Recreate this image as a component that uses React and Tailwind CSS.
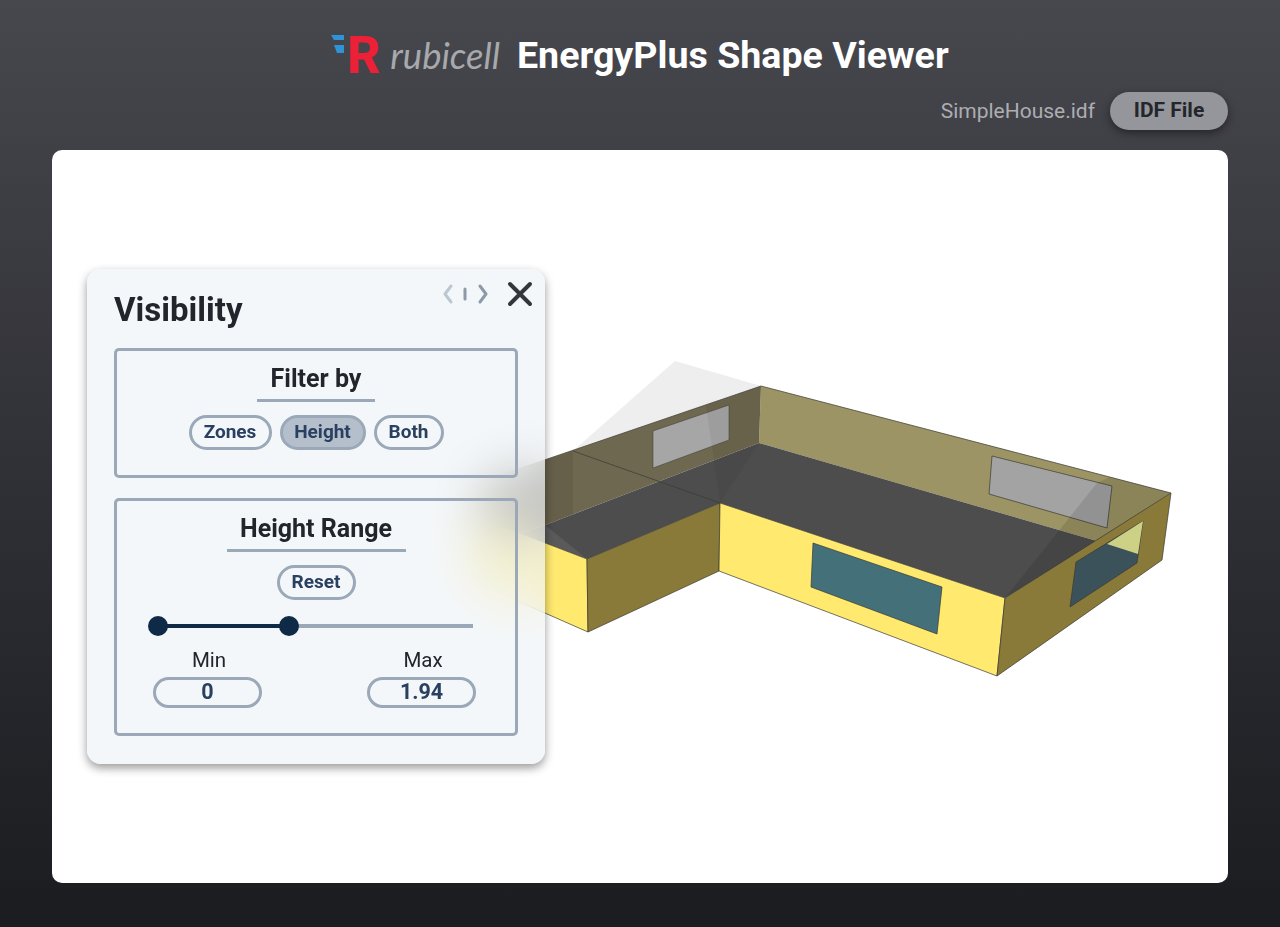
import React from 'react';

const sans = "font-['Roboto',sans-serif]";

const Pill = ({ active, className = '', children }) => (
  <button
    className={`h-[35px] rounded-full border-[3px] border-[#9aa8b8] text-[19px] font-bold text-[#2a4060] ${
      active ? 'bg-[#b4bfcb]' : 'bg-transparent'
    } ${className}`}
  >
    {children}
  </button>
);

const SectionTitle = ({ underline, children }) => (
  <div className={`flex flex-col items-center ${underline}`}>
    <h3 className="text-[25px] leading-[34px] font-bold text-[#22252b] whitespace-nowrap">{children}</h3>
    <div className={`mt-[3px] h-[3px] bg-[#9aa8b8] ${underline}`} />
  </div>
);

const NumberField = ({ label, value }) => (
  <div className="flex w-[109px] flex-col items-center">
    <span className="pl-[3px] text-[20.5px] leading-[24px] text-[#22252b]">{label}</span>
    <div className="mt-[5px] flex h-[31px] w-full items-center justify-center rounded-full border-[3px] border-[#9aa8b8] text-[21.5px] font-bold text-[#2a4060]">
      {value}
    </div>
  </div>
);

const Building = () => (
  <svg className="absolute inset-0 h-full w-full" viewBox="52 150 1176 733">
    <g stroke="#3a3a32" strokeWidth="0.7" strokeLinejoin="round">
      {/* ghost roof */}
      <polygon points="675,361 761,386 573,451" fill="#eeeeee" stroke="none" />
      {/* back walls */}
      <polygon points="761,386 1171,493 1097,541 759,443" fill="#9c9464" stroke="none" />
      <polygon points="480,482 761,386 759,443 480,550" fill="#6f6850" stroke="none" />
      <polygon points="480,482 573,451 573,515 480,550" fill="#000000" fillOpacity="0.08" stroke="none" />
      {/* floor */}
      <polygon points="759,443 1097,541 1005,598 720,503 587,559 480,518 480,550" fill="#4d4d4d" stroke="none" />
      <line x1="480" y1="482" x2="761" y2="386" />
      <line x1="761" y1="386" x2="1171" y2="493" />
      {/* back windows */}
      <polygon points="729,405 729,440 653,468 653,431" fill="#a6a6a6" strokeWidth="0.5" />
      <polygon points="992,456 1112,486 1107,528 989,494" fill="#a3a3a3" />
      {/* wedges seen through the walls */}
      <polygon points="1005,598 1097,483 1110,477 1171,493 1097,541" fill="#000000" fillOpacity="0.1" stroke="none" />
      <polygon points="720,503 706,406 761,386 759,443" fill="#000000" fillOpacity="0.05" stroke="none" />
      <polygon points="545,525 587,559 545,543" fill="#ffffff" fillOpacity="0.08" stroke="none" />
      {/* outer faces */}
      <polygon points="470,514 587,559 588,632 470,580" fill="#ffe96f" />
      <polygon points="587,559 720,503 719,571 588,632" fill="#8a7a3a" />
      <polygon points="720,503 1005,598 997,676 719,571" fill="#ffe96f" />
      <polygon points="1005,598 1171,493 1162,560 997,676" fill="#8a7a3a" />
      {/* front windows */}
      <polygon points="813,543 942,587 937,634 811,587" fill="#437079" />
      <polygon points="1076,562 1143,521 1137,563 1070,607" fill="#3b525a" />
      <polygon points="1107,544 1143,521 1138,554" fill="#ccd186" stroke="none" />
      <line x1="573" y1="451" x2="720" y2="503" />
    </g>
  </svg>
);

const App = () => {
  return (
    <div className={`flex h-[927px] flex-col bg-gradient-to-b from-[#47474e] to-[#1b1c20] ${sans}`}>
      <header className="flex h-[150px] flex-col px-[52px]">
        <div className="flex h-[92px] shrink-0 items-center justify-center pt-[18px]">
          {/* Rubicell logo */}
          <div className="flex items-center">
            <svg width="16" height="20" viewBox="0 0 16 20" className="mb-[20px]">
              <polygon points="0,0 13,0 13,5 3,5" fill="#2f93d8" />
              <polygon points="3,10 13,10 13,18 6,18" fill="#2f93d8" />
            </svg>
            <span className="w-[30px] text-[52px] leading-[53px] font-extrabold text-[#ec2036]">R</span>
            <span className="ml-[13px] font-['Lato',sans-serif] text-[36.5px] leading-[40px] text-[#a7a9ac] italic">
              rubicell
            </span>
          </div>
          <h1 className="ml-[17px] text-[37.6px] leading-[44px] font-bold whitespace-nowrap text-white">
            EnergyPlus Shape Viewer
          </h1>
        </div>
        <div className="flex items-center justify-end">
          <span className="mt-[2px] mr-[15px] text-[21px] text-[#adadb2]">SimpleHouse.idf</span>
          <button className="h-[38px] w-[118px] rounded-full bg-[#94969b] text-[21px] font-bold text-[#24262b] shadow-[0_3px_8px_rgba(0,0,0,0.45)]">
            IDF File
          </button>
        </div>
      </header>

      <main className="relative mx-[52px] h-[733px] overflow-hidden rounded-[10px] bg-white">
        <Building />

        <section className="absolute top-[119px] left-[35px] flex h-[495px] w-[458px] flex-col rounded-[14px] bg-[#f0f4f8]/70 px-[27px] shadow-[0_4px_10px_rgba(0,0,0,0.4)] backdrop-blur-[24px]">
          <div className="relative">
            <h2 className="pt-[21px] text-[33px] leading-[40px] font-bold text-[#22252b]">Visibility</h2>
            <div className="absolute top-[12px] right-[-15px] flex items-center">
              <svg width="46" height="22" viewBox="0 0 46 22" fill="none" strokeWidth="3" strokeLinecap="round" strokeLinejoin="round">
                <path d="M9 3 3 11 9 19" stroke="#bcc7d2" />
                <path d="M23 6V16" stroke="#8a9aa8" />
                <path d="M38 3 44 11 38 19" stroke="#8a9aa8" />
              </svg>
              <svg className="ml-[19px]" width="26" height="26" viewBox="0 0 26 26" fill="none" stroke="#33363c" strokeWidth="4" strokeLinecap="round">
                <path d="M3 3 23 23M23 3 3 23" />
              </svg>
            </div>
          </div>

          <div className="mt-[18px] flex h-[130px] flex-col items-center rounded-[5px] border-[3px] border-[#9aa8b8] pt-[11px]">
            <SectionTitle underline="w-[118px]">Filter by</SectionTitle>
            <div className="mt-[13px] flex gap-[8px]">
              <Pill className="w-[83px]">Zones</Pill>
              <Pill active className="w-[86px]">Height</Pill>
              <Pill className="w-[70px]">Both</Pill>
            </div>
          </div>

          <div className="mt-[20px] flex h-[238px] flex-col items-center rounded-[5px] border-[3px] border-[#9aa8b8] pt-[11px]">
            <SectionTitle underline="w-[179px]">Height Range</SectionTitle>
            <Pill className="mt-[13px] w-[79px]">Reset</Pill>

            {/* range slider */}
            <div className="relative mt-[24px] ml-[41px] h-[4px] w-[315px] shrink-0 self-start bg-[#9aa8b8]">
              <div className="h-full w-[131px] bg-[#0e2a47]" />
              <span className="absolute top-[-8px] left-[-10px] h-[20px] w-[20px] rounded-full bg-[#0e2a47]" />
              <span className="absolute top-[-8px] left-[121px] h-[20px] w-[20px] rounded-full bg-[#0e2a47]" />
            </div>

            <div className="mt-[20px] flex w-full justify-between pr-[39px] pl-[36px]">
              <NumberField label="Min" value="0" />
              <NumberField label="Max" value="1.94" />
            </div>
          </div>
        </section>
      </main>
    </div>
  );
};

export default App;
